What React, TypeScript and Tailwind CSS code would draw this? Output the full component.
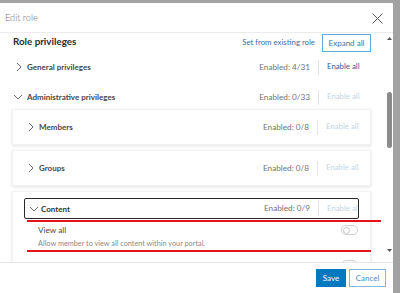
import React from 'react';

const ChevronRight = () => (
  <svg width="8" height="10" viewBox="0 0 8 10" className="shrink-0">
    <path d="M2 1 L6 5 L2 9" fill="none" stroke="#6b6b6b" strokeWidth="1" />
  </svg>
);

const ChevronDown = () => (
  <svg width="10" height="8" viewBox="0 0 10 8" className="shrink-0">
    <path d="M1 2 L5 6 L9 2" fill="none" stroke="#6b6b6b" strokeWidth="1" />
  </svg>
);

interface CountProps {
  count: string;
  active?: boolean;
}

const Counter: React.FC<CountProps> = ({ count, active }) => (
  <div className="flex items-center ml-auto">
    <span className="text-[8.2px] text-[#727272]">Enabled: {count}</span>
    <span className="ml-[8px] h-[15px] border-l border-[#e3e3e3]" />
    <span
      className={
        'pl-[8px] w-[42px] whitespace-nowrap text-[7.8px] ' +
        (active ? 'text-[#2d5f8f]' : 'text-[#c3d6e6]')
      }
    >
      Enable all
    </span>
  </div>
);

const Toggle = () => (
  <div className="w-[17px] h-[10px] rounded-full border border-[#d0d0d0] bg-white flex items-center px-[1px]">
    <div className="w-[7px] h-[7px] rounded-full border border-[#c8c8c8]" />
  </div>
);

export default function App() {
  return (
    <div
      className="w-[400px] h-[293px] bg-[#a2a2a2] pt-[3px] pr-[7px] overflow-hidden"
      style={{ fontFamily: 'Lato, "Open Sans", sans-serif' }}
    >
      <div className="relative h-full bg-white flex flex-col">
        {/* header */}
        <div className="h-[30px] shrink-0 flex items-center pl-[5px] pr-[10px] border-b border-[#ececec]">
          <span className="text-[9.2px] font-light text-[#6e6e6e]">Edit role</span>
          <svg width="11" height="11" viewBox="0 0 11 11" className="ml-auto mt-[2px]">
            <path d="M0.5 0.5 L10.5 10.5 M10.5 0.5 L0.5 10.5" stroke="#5a5a5a" strokeWidth="1" />
          </svg>
        </div>

        {/* body */}
        <div className="flex flex-1 min-h-0">
          <div className="flex-1 overflow-hidden pl-[12px] pr-[15px]">
            <div className="mt-[1px] h-[18px] flex items-center">
              <span className="pl-[1px] mb-[3px] text-[9.8px] font-bold text-[#2b2b2b]">Role privileges</span>
              <span className="ml-auto text-[7.8px] text-[#3a6ea5]">Set from existing role</span>
              <span className="ml-[7px] h-[18px] w-[49px] flex items-center justify-center border border-[#63a8da] text-[8px] text-[#3a76ae]">
                Expand all
              </span>
            </div>

            <div className="h-[30px] flex items-center pl-[3px] pr-[10px]">
              <ChevronRight />
              <span className="ml-[4px] text-[8px] font-bold text-[#474747]">General privileges</span>
              <Counter count="4/31" active />
            </div>

            <div className="mt-[3px] h-[24px] flex items-center pl-[1px] pr-[10px]">
              <ChevronDown />
              <span className="ml-[4px] text-[8px] font-bold text-[#474747]">Administrative privileges</span>
              <Counter count="0/33" />
            </div>

            <div className="flex flex-col gap-[5px]">
              <div className="h-[36px] flex items-center pl-[14px] pr-[10px] shadow-[0_1px_3px_rgba(0,0,0,0.12)] border border-[#f2f2f2]">
                <ChevronRight />
                <span className="ml-[4px] text-[8px] font-bold text-[#474747]">Members</span>
                <Counter count="0/8" />
              </div>
              <div className="h-[36px] flex items-center pl-[14px] pr-[10px] shadow-[0_1px_3px_rgba(0,0,0,0.12)] border border-[#f2f2f2]">
                <ChevronRight />
                <span className="ml-[4px] text-[8px] font-bold text-[#474747]">Groups</span>
                <Counter count="0/8" />
              </div>
              <div className="pt-[6px] px-[11px] pb-[8px] border border-[#f2f2f2] shadow-[0_1px_3px_rgba(0,0,0,0.12)]">
                <div className="h-[21px] flex items-center pl-[4px] pr-[0px] border border-[#2b2b2b] rounded-[2px] overflow-hidden">
                  <ChevronDown />
                  <span className="ml-[2px] text-[8px] font-bold text-[#333]">Content</span>
                  <div className="flex items-center ml-auto -mr-[3px]">
                    <span className="text-[8.2px] text-[#727272]">Enabled: 0/9</span>
                    <span className="ml-[8px] h-[15px] border-l border-[#e3e3e3]" />
                    <span className="pl-[8px] w-[42px] whitespace-nowrap text-[7.8px] text-[#c3d6e6]">Enable all</span>
                  </div>
                </div>
                <div className="mt-[3px] pl-[14px] flex items-start">
                  <div className="flex flex-col">
                    <span className="text-[8.2px] text-[#4a4a4a] leading-[16px]">View all</span>
                    <span className="text-[7.3px] text-[#8a8a8a] leading-[12px]">
                      Allow member to view all content within your portal.
                    </span>
                  </div>
                  <div className="ml-auto mt-[3px] mr-[1px]">
                    <Toggle />
                  </div>
                </div>
                <div className="mt-[10px] flex justify-end mr-[1px]">
                  <Toggle />
                </div>
              </div>
            </div>
          </div>

          {/* scrollbar */}
          <div className="w-[7px] shrink-0 flex flex-col items-center py-[4px]">
            <svg width="5" height="3" viewBox="0 0 5 3">
              <path d="M0 3 L2.5 0 L5 3 Z" fill="#555" />
            </svg>
            <div className="mt-[52px] w-[5px] h-[56px] rounded-full bg-[#8b8b8b]" />
            <svg width="5" height="3" viewBox="0 0 5 3" className="mt-auto mb-[6px]">
              <path d="M0 0 L2.5 3 L5 0 Z" fill="#555" />
            </svg>
          </div>
        </div>

        {/* footer */}
        <div className="h-[31px] shrink-0 flex items-center justify-end gap-[3px] pr-[7px] border-t border-[#e6e6e6] bg-white">
          <span className="h-[18px] w-[30px] flex items-center justify-center bg-[#0079c1] text-[8px] text-white">
            Save
          </span>
          <span className="h-[18px] w-[37px] flex items-center justify-center border border-[#80b9e0] text-[8px] text-[#4b8fc6]">
            Cancel
          </span>
        </div>

        {/* red annotation lines */}
        <div className="absolute left-[27px] top-[217px] w-[354px] h-[2px] bg-[#e3121b]" />
        <div className="absolute left-[27px] top-[247px] w-[344px] h-[2px] bg-[#e3121b]" />
      </div>
    </div>
  );
}
